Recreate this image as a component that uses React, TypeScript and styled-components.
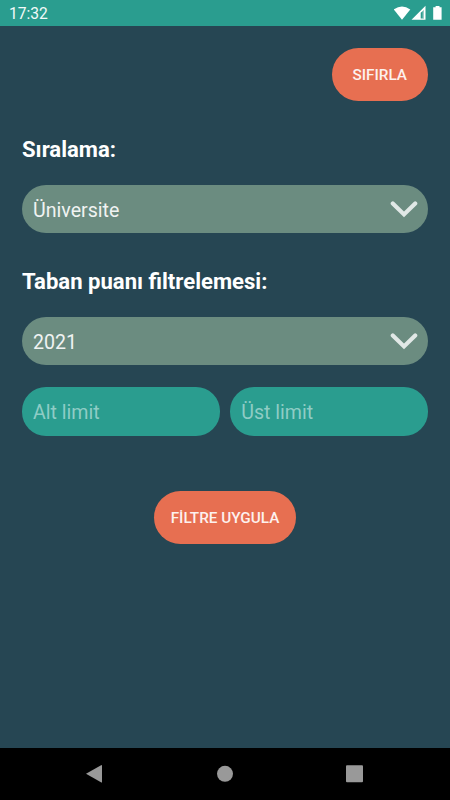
import React from "react";
import styled, { createGlobalStyle } from "styled-components";

const GlobalStyle = createGlobalStyle`
  * { box-sizing: border-box; }
  body { margin: 0; background: #264653; font-family: Roboto, "Liberation Sans", sans-serif; }
`;

const Screen = styled.div`
  display: flex;
  flex-direction: column;
  width: 450px;
  height: 800px;
  overflow: hidden;
  background: #264653;
  color: #fff;
`;

const StatusBar = styled.header`
  display: flex;
  flex: none;
  align-items: center;
  justify-content: space-between;
  height: 26px;
  padding: 2px 0 0 9px;
  background: #2a9d8f;
  font-size: 15.6px;
  line-height: 20px;
  color: #f2faf9;
`;

const StatusIcons = styled.svg`
  display: block;
  width: 56px;
  height: 20px;
  margin-top: -2px;
`;

const Content = styled.main`
  display: flex;
  flex: 1;
  flex-direction: column;
  padding: 22px 22px 0;
`;

const PillButton = styled.button<{ $width: number; $align: string; $top?: number }>`
  align-self: ${(p) => p.$align};
  width: ${(p) => p.$width}px;
  height: 52.5px;
  margin: ${(p) => p.$top ?? 0}px 0 0;
  padding: 1px 0 0;
  border: 0;
  border-radius: 27px;
  background: #e76f51;
  color: #fdf1ee;
  font: 500 15.3px/20px Roboto, "Liberation Sans", sans-serif;
  white-space: nowrap;
`;

const Heading = styled.h2<{ $top: number }>`
  margin: ${(p) => p.$top}px 0 21px;
  font-size: 22.1px;
  font-weight: 700;
  line-height: 30px;
`;

const Select = styled.div`
  display: flex;
  align-items: center;
  justify-content: space-between;
  height: 48px;
  padding: 2px 10px 0 11px;
  border-radius: 24px;
  background: #6b8c80;
  color: #f0f3f2;
  font-size: 19.6px;
`;

const Chevron = styled.svg`
  display: block;
  width: 28px;
  height: 18px;
  margin-top: -2px;
`;

const LimitRow = styled.div`
  display: grid;
  grid-template-columns: 1fr 1fr;
  gap: 10.5px;
  margin-top: 21.5px;
`;

const LimitInput = styled.input`
  width: 100%;
  height: 49.5px;
  padding: 2px 11px 0;
  border: 0;
  border-radius: 24px;
  outline: 0;
  background: #2a9d8f;
  color: #fff;
  font: 400 19.6px Roboto, "Liberation Sans", sans-serif;
  &::placeholder { color: #8fccc5; opacity: 1; }
`;

const NavBar = styled.nav`
  flex: none;
  height: 52px;
  background: #000;
`;

const NavIcons = styled.svg`
  display: block;
`;

function Dropdown({ value }: { value: string }) {
  return (
    <Select>
      <span>{value}</span>
      <Chevron viewBox="0 0 28 18">
        <path d="M2.8 3.5 L14 14.4 L25.2 3.5" fill="none" stroke="#e1e8e6" strokeWidth="4.2" strokeLinecap="round" />
      </Chevron>
    </Select>
  );
}

export default function App() {
  return (
    <>
      <GlobalStyle />
      <Screen>
        <StatusBar>
          <span>17:32</span>
          <StatusIcons viewBox="394 3 56 20" fill="#fff">
            <path d="M393.7 9.4 Q402 3.4 410.3 9.4 L402 19.8 Z" />
            <path fillRule="evenodd" d="M425.5 5.8 V19.8 H411.5 Z M420.7 12.8 V18.5 H424 V9.9 Z" />
            <path d="M422.6 10.8 L424 9.9 V18.5 H422.6 Z" opacity=".5" />
            <path d="M435.6 6 H439.5 V7.2 H441.6 V19.8 H433.2 V7.2 H435.6 Z" />
          </StatusIcons>
        </StatusBar>
        <Content>
          <PillButton $width={96.5} $align="flex-end">SIFIRLA</PillButton>
          <Heading $top={33.5}>Sıralama:</Heading>
          <Dropdown value="Üniversite" />
          <Heading $top={33}>Taban puanı filtrelemesi:</Heading>
          <Dropdown value="2021" />
          <LimitRow>
            <LimitInput placeholder="Alt limit" />
            <LimitInput placeholder="Üst limit" />
          </LimitRow>
          <PillButton $width={142.5} $align="center" $top={55}>FİLTRE UYGULA</PillButton>
        </Content>
        <NavBar>
          <NavIcons width="450" height="52" viewBox="0 748 450 52" fill="#999">
            <path d="M86 773.8 L101.5 765 Q102 765 102 765.6 V782 Q102 782.7 101.4 782.5 Z" />
            <circle cx="225" cy="773.8" r="8" />
            <rect x="346" y="765.3" width="17" height="16.9" rx="1" />
          </NavIcons>
        </NavBar>
      </Screen>
    </>
  );
}
